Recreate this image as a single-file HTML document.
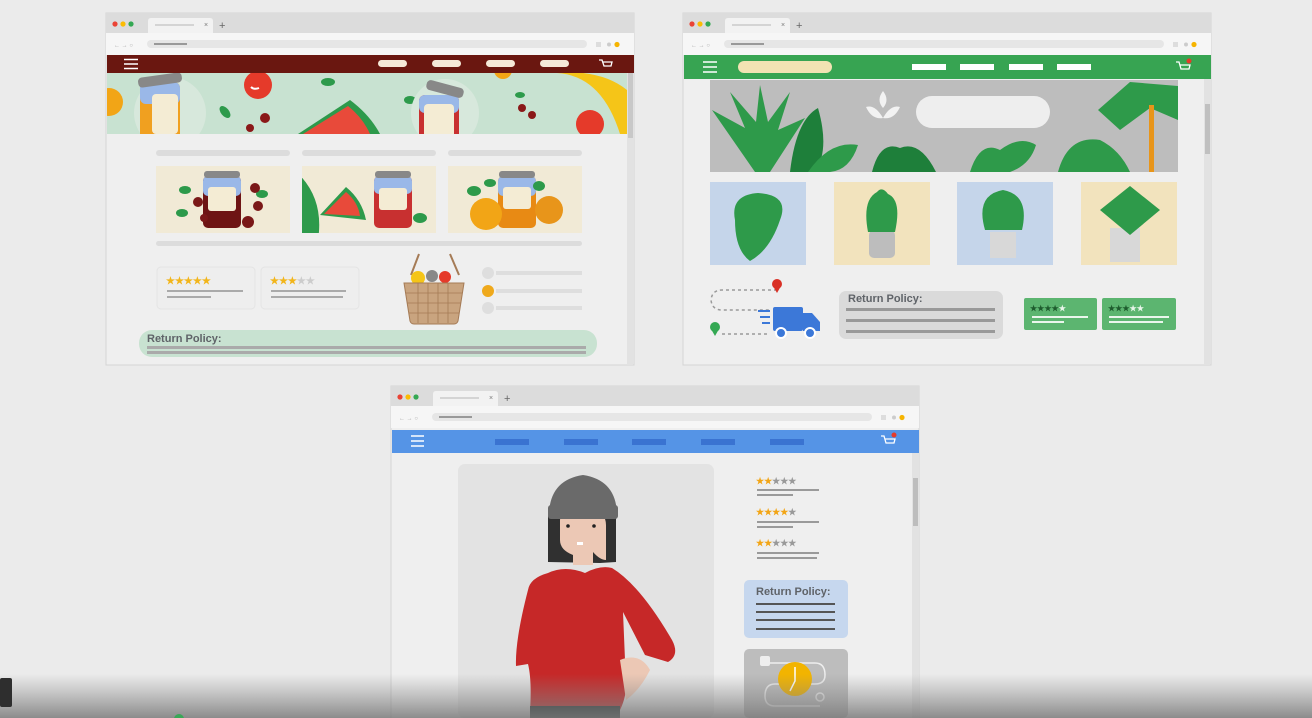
<!DOCTYPE html>
<html><head><meta charset="utf-8"><style>
html,body{margin:0;padding:0;background:#ebebeb;}
svg{display:block}
text{font-family:"Liberation Sans",sans-serif;font-weight:bold;fill:#5f6368}
</style></head><body>
<svg width="1312" height="718" viewBox="0 0 1312 718" xmlns="http://www.w3.org/2000/svg">
<defs>
<clipPath id="h1"><rect x="107" y="73" width="520" height="61"/></clipPath>
<clipPath id="h2"><rect x="710" y="80" width="468" height="92"/></clipPath>
<clipPath id="t1"><rect x="302" y="166" width="134" height="67"/></clipPath>
<linearGradient id="fade" x1="0" y1="0" x2="0" y2="1">
<stop offset="0" stop-color="#888" stop-opacity="0"/>
<stop offset="1" stop-color="#7a7a7a" stop-opacity="0.85"/>
</linearGradient>
<g id="chrome">
<rect x="0" y="0" width="528" height="352" fill="#efefef" stroke="#d4d4d4"/>
<rect x="0" y="0" width="528" height="20" fill="#dcdcdc"/>
<circle cx="9" cy="11" r="2.6" fill="#ea4335"/><circle cx="17" cy="11" r="2.6" fill="#fbbc04"/><circle cx="25" cy="11" r="2.6" fill="#34a853"/>
<path d="M42 20 V8 Q42 5 45 5 H104 Q107 5 107 8 V20Z" fill="#f2f2f2"/>
<rect x="49" y="11" width="39" height="2" fill="#d4d4d4"/>
<text x="98" y="14" font-size="7" style="font-weight:normal;fill:#777">×</text>
<text x="113" y="16" font-size="11" style="font-weight:normal;fill:#666">+</text>
<rect x="0" y="20" width="528" height="22" fill="#f6f6f6"/>
<text x="8" y="34" font-size="6" style="font-weight:normal;fill:#aaa">← → ○</text>
<rect x="41" y="27" width="440" height="8" rx="4" fill="#e6e6e6"/>
<rect x="48" y="30" width="33" height="2" fill="#999"/>
<rect x="490" y="29" width="5" height="5" fill="#ddd"/><circle cx="503" cy="31.5" r="2" fill="#ccc"/><circle cx="511" cy="31.5" r="2.6" fill="#f6b400"/>
</g>
</defs>

<!-- WINDOW 1 -->
<g transform="translate(106,13)"><use href="#chrome"/></g>
<rect x="107" y="55" width="527" height="18" fill="#6a1710"/>
<g stroke="#fff" stroke-width="1.6"><path d="M124 59.5h14M124 64h14M124 68.5h14"/></g>
<g fill="#f5e9d8"><rect x="378" y="60" width="29" height="7" rx="3.5"/><rect x="432" y="60" width="29" height="7" rx="3.5"/><rect x="486" y="60" width="29" height="7" rx="3.5"/><rect x="540" y="60" width="29" height="7" rx="3.5"/></g>
<path d="M599 60h3l2 6h7l1-4h-9" stroke="#fff" stroke-width="1.3" fill="none"/>
<rect x="627" y="73" width="7" height="291" fill="#e2e2e2"/><rect x="628" y="73" width="5" height="65" fill="#c8c8c8"/>
<g clip-path="url(#h1)">
<rect x="107" y="73" width="520" height="61" fill="#c8e2d1"/>
<circle cx="109" cy="102" r="14" fill="#f2a516"/>
<circle cx="170" cy="113" r="36" fill="#d7e8dc"/>
<rect x="140" y="82" width="40" height="60" rx="6" fill="#f0a020"/><rect x="140" y="82" width="40" height="22" rx="6" fill="#9ab8e8"/><rect x="152" y="94" width="26" height="40" rx="4" fill="#f4ecd4"/><rect x="138" y="75" width="44" height="10" rx="4" transform="rotate(-8 160 80)" fill="#888"/>
<circle cx="258" cy="85" r="14" fill="#e53a2a"/><path d="M251 87q3 3 8 1" stroke="#fff" stroke-width="2" fill="none"/>
<path d="M298 134 L350 100 Q370 115 380 134Z" fill="#2d9a4b"/><path d="M303 134 L348 106 Q363 118 370 134Z" fill="#e84a3a"/>
<g fill="#2d9a4b"><ellipse cx="225" cy="112" rx="7" ry="4" transform="rotate(50 225 112)"/><ellipse cx="328" cy="82" rx="7" ry="4"/><ellipse cx="410" cy="100" rx="6" ry="4"/><ellipse cx="520" cy="95" rx="5" ry="3"/></g>
<g fill="#8a1818"><circle cx="265" cy="118" r="5"/><circle cx="250" cy="128" r="4"/><circle cx="522" cy="108" r="4"/><circle cx="532" cy="115" r="4"/></g>
<circle cx="445" cy="113" r="34" fill="#d7e8dc"/>
<rect x="419" y="95" width="40" height="45" rx="6" fill="#c83030"/><rect x="419" y="95" width="40" height="18" rx="6" fill="#9ab8e8"/><rect x="424" y="104" width="30" height="34" rx="4" fill="#f4ecd4"/><rect x="426" y="84" width="38" height="10" rx="4" transform="rotate(15 445 89)" fill="#888"/>
<circle cx="503" cy="70" r="9" fill="#f2a516"/>
<path d="M548 73 Q600 70 620 134 L627 134 L627 90 Q600 68 548 73Z" fill="#f5c518"/>
<circle cx="590" cy="124" r="14" fill="#e53a2a"/>
</g>
<!-- content -->
<g fill="#dcdcdc"><rect x="156" y="150" width="134" height="6" rx="3"/><rect x="302" y="150" width="134" height="6" rx="3"/><rect x="448" y="150" width="134" height="6" rx="3"/><rect x="156" y="241" width="426" height="5" rx="2.5"/></g>
<g fill="#f1ead6"><rect x="156" y="166" width="134" height="67"/><rect x="302" y="166" width="134" height="67"/><rect x="448" y="166" width="134" height="67"/></g>
<rect x="203" y="176" width="38" height="52" rx="5" fill="#6e1414"/><rect x="203" y="176" width="38" height="20" rx="5" fill="#9ab8e8"/><rect x="208" y="187" width="28" height="24" rx="3" fill="#f4ecd4"/><rect x="204" y="171" width="36" height="7" rx="3" fill="#888"/>
<g fill="#2d9a4b"><ellipse cx="185" cy="190" rx="6" ry="4"/><ellipse cx="182" cy="213" rx="6" ry="4"/><ellipse cx="262" cy="194" rx="6" ry="4"/></g>
<g fill="#7a1818"><circle cx="198" cy="202" r="5"/><circle cx="255" cy="188" r="5"/><circle cx="258" cy="206" r="5"/><circle cx="248" cy="222" r="6"/><circle cx="204" cy="218" r="4"/></g>
<g clip-path="url(#t1)">
<path d="M292 168 Q325 195 318 240 H292Z" fill="#2d9a4b"/><path d="M320 215 L346 187 Q362 200 366 220Z" fill="#2d9a4b"/><path d="M324 214 L346 192 Q358 202 360 216Z" fill="#e84a3a"/>
</g>
<rect x="374" y="176" width="38" height="52" rx="5" fill="#c83030"/><rect x="374" y="176" width="38" height="18" rx="5" fill="#9ab8e8"/><rect x="379" y="188" width="28" height="22" rx="3" fill="#f4ecd4"/><rect x="375" y="171" width="36" height="7" rx="3" fill="#888"/>
<ellipse cx="420" cy="218" rx="7" ry="5" fill="#2d9a4b"/>
<rect x="498" y="176" width="38" height="52" rx="5" fill="#e88a14"/><rect x="498" y="176" width="38" height="20" rx="5" fill="#9ab8e8"/><rect x="503" y="187" width="28" height="22" rx="3" fill="#f4ecd4"/><rect x="499" y="171" width="36" height="7" rx="3" fill="#888"/>
<g fill="#2d9a4b"><ellipse cx="474" cy="191" rx="7" ry="5"/><ellipse cx="490" cy="183" rx="6" ry="4"/><ellipse cx="539" cy="186" rx="6" ry="5"/></g>
<circle cx="486" cy="214" r="16" fill="#f2a516"/><circle cx="549" cy="210" r="14" fill="#e8951a"/>
<rect x="157" y="267" width="98" height="42" rx="4" fill="#eeeeee" stroke="#e4e4e4"/>
<rect x="261" y="267" width="98" height="42" rx="4" fill="#eeeeee" stroke="#e4e4e4"/>
<text x="166" y="284" font-size="10" style="fill:#f2b51a">★★★★★</text>
<text x="270" y="284" font-size="10" style="fill:#f2b51a">★★★<tspan style="fill:#ccc">★★</tspan></text>
<g fill="#aaa"><rect x="167" y="290" width="76" height="2"/><rect x="167" y="296" width="44" height="2"/><rect x="271" y="290" width="75" height="2"/><rect x="271" y="296" width="72" height="2"/></g>
<path d="M411 275 L419 254 M459 275 L450 254" stroke="#a57b56" stroke-width="2"/>
<circle cx="418" cy="278" r="7" fill="#f5c518"/><circle cx="445" cy="277" r="6" fill="#e53a2a"/><circle cx="432" cy="276" r="6" fill="#888"/>
<path d="M404 283 H464 L458 321 Q457 324 454 324 H414 Q411 324 410 321Z" fill="#c9a47f" stroke="#a57b56"/>
<g stroke="#a57b56" stroke-width="0.8"><path d="M406 293h56M407 303h54M409 313h50M418 283v40M428 283v40M438 283v40M448 283v40"/></g>
<circle cx="488" cy="273" r="6" fill="#dedede"/><circle cx="488" cy="291" r="6" fill="#efa91c"/><circle cx="488" cy="308" r="6" fill="#dedede"/>
<g fill="#dedede"><rect x="496" y="271" width="86" height="4"/><rect x="496" y="289" width="86" height="4"/><rect x="496" y="306" width="86" height="4"/></g>
<rect x="139" y="330" width="458" height="27" rx="13" fill="#c8e2d1"/>
<text x="147" y="342" font-size="11">Return Policy:</text>
<rect x="147" y="346" width="439" height="3" fill="#aaa"/><rect x="147" y="351" width="439" height="3" fill="#aaa"/>

<!-- WINDOW 2 -->
<g transform="translate(683,13)"><use href="#chrome"/></g>
<rect x="684" y="55" width="527" height="24" fill="#37a452"/>
<g stroke="#fff" stroke-width="1.6"><path d="M703 62h14M703 67h14M703 72h14"/></g>
<rect x="738" y="61" width="94" height="12" rx="6" fill="#f2e3b3"/>
<g fill="#fff"><rect x="912" y="64" width="34" height="6"/><rect x="960" y="64" width="34" height="6"/><rect x="1009" y="64" width="34" height="6"/><rect x="1057" y="64" width="34" height="6"/></g>
<path d="M1176 62h3l2 7h8l1-4h-10" stroke="#fff" stroke-width="1.3" fill="none"/><circle cx="1189" cy="61" r="2.5" fill="#e53a2a"/>
<rect x="1204" y="79" width="7" height="285" fill="#e2e2e2"/><rect x="1205" y="104" width="5" height="50" fill="#c0c0c0"/>
<g clip-path="url(#h2)">
<rect x="710" y="80" width="468" height="92" fill="#bdbdbd"/>
<rect x="916" y="96" width="134" height="32" rx="16" fill="#eeeeee"/>
<path d="M883 91 Q876 100 883 108 Q890 100 883 91Z M866 107 Q875 104 883 118 Q872 120 866 107Z M900 107 Q891 104 883 118 Q894 120 900 107Z" fill="#f2f2f2"/>
<g fill="#2e9a4a">
<path d="M755 172 L712 110 L745 128 L730 92 L756 122 L760 85 L768 122 L790 92 L778 130 L805 118 L770 172Z"/>
<path d="M790 172 Q796 120 818 108 Q830 150 815 172Z" fill="#1e7f3a"/>
<path d="M808 172 Q830 140 858 145 Q850 170 830 172Z"/>
<path d="M872 172 Q880 140 900 148 Q920 140 936 172Z" fill="#1e7f3a"/>
<path d="M970 172 Q980 140 1000 150 Q1020 135 1036 145 Q1030 165 1010 172Z"/>
<path d="M1058 172 Q1068 135 1100 140 Q1120 150 1130 172Z"/>
<path d="M1098 110 L1130 82 L1178 86 L1178 120 L1150 108 L1120 130Z"/>
</g>
<rect x="1149" y="105" width="5" height="67" fill="#e8951a"/>
</g>
<rect x="710" y="182" width="96" height="83" fill="#c5d5ea"/><rect x="834" y="182" width="96" height="83" fill="#f2e3bd"/><rect x="957" y="182" width="96" height="83" fill="#c5d5ea"/><rect x="1081" y="182" width="96" height="83" fill="#f2e3bd"/>
<path d="M735 220 Q730 195 758 193 Q790 195 780 220 Q770 250 750 261 Q735 250 735 220Z" fill="#2e9a4a"/>
<rect x="869" y="230" width="26" height="28" rx="5" fill="#bdbdbd"/><path d="M868 232 Q862 200 877 192 Q882 186 888 194 Q902 200 895 232Z" fill="#2e9a4a"/>
<rect x="990" y="232" width="26" height="26" fill="#d8d8d8"/><path d="M985 230 Q975 195 1003 190 Q1030 195 1022 230Z" fill="#2e9a4a"/>
<rect x="1110" y="228" width="30" height="34" fill="#d8d8d8"/><path d="M1100 210 L1130 186 L1160 210 L1130 235Z" fill="#2e9a4a"/>
<path d="M777 290 H722 Q712 290 711 300 Q712 310 722 310 H770 M722 334 H770" stroke="#9a9a9a" stroke-width="1.5" stroke-dasharray="3 3" fill="none"/>
<circle cx="777" cy="284" r="5" fill="#d93025"/><path d="M773 286 L777 293 L781 286Z" fill="#d93025"/>
<circle cx="715" cy="327" r="5" fill="#34a853"/><path d="M711 329 L715 336 L719 329Z" fill="#34a853"/>
<rect x="773" y="307" width="30" height="24" rx="2" fill="#3c78d8"/><path d="M803 313 H812 L820 322 V331 H803Z" fill="#3c78d8"/>
<circle cx="781" cy="333" r="5" fill="#3c78d8" stroke="#fff" stroke-width="2"/><circle cx="810" cy="333" r="5" fill="#3c78d8" stroke="#fff" stroke-width="2"/>
<g stroke="#3c78d8" stroke-width="2"><path d="M758 311h12M760 317h10M762 323h8"/></g>
<rect x="839" y="291" width="164" height="48" rx="7" fill="#dadada"/>
<text x="848" y="302" font-size="11">Return Policy:</text>
<g fill="#999"><rect x="846" y="308" width="149" height="3"/><rect x="846" y="319" width="149" height="3"/><rect x="846" y="330" width="149" height="3"/></g>
<rect x="1024" y="298" width="73" height="32" rx="2" fill="#5cb570"/><rect x="1102" y="298" width="74" height="32" rx="2" fill="#5cb570"/>
<text x="1030" y="311" font-size="8" style="fill:#1e5c2e">★★★★<tspan style="fill:#e8f5ea">★</tspan></text>
<text x="1108" y="311" font-size="8" style="fill:#1e5c2e">★★★<tspan style="fill:#e8f5ea">★★</tspan></text>
<g fill="#eaf6ec"><rect x="1032" y="316" width="56" height="2"/><rect x="1032" y="321" width="32" height="2"/><rect x="1109" y="316" width="60" height="2"/><rect x="1109" y="321" width="54" height="2"/></g>

<!-- WINDOW 3 -->
<g transform="translate(391,386)"><use href="#chrome"/></g>
<rect x="392" y="430" width="527" height="23" fill="#5594e6"/>
<g stroke="#fff" stroke-width="1.6"><path d="M411 436h13M411 441h13M411 446h13"/></g>
<g fill="#3a73d1"><rect x="495" y="439" width="34" height="6"/><rect x="564" y="439" width="34" height="6"/><rect x="632" y="439" width="34" height="6"/><rect x="701" y="439" width="34" height="6"/><rect x="770" y="439" width="34" height="6"/></g>
<path d="M881 436h3l2 7h8l1-4h-10" stroke="#fff" stroke-width="1.3" fill="none"/><circle cx="894" cy="435" r="2.5" fill="#e53a2a"/>
<rect x="912" y="453" width="7" height="265" fill="#e2e2e2"/><rect x="913" y="478" width="5" height="48" fill="#bdbdbd"/>
<rect x="458" y="464" width="256" height="254" rx="7" fill="#e3e3e3"/>
<path d="M548 515 L548 562 L600 563 L616 562 L616 515Z" fill="#303030"/>
<path d="M560 520 Q560 510 585 505 Q606 510 606 525 L606 560 Q600 560 593 552 L593 565 L573 565 L573 555 Q560 550 560 540Z" fill="#ecc8b5"/>
<path d="M549 514 Q550 480 583 475 Q616 480 617 514Z" fill="#6a6a6a"/>
<rect x="548" y="505" width="70" height="14" rx="3" fill="#6a6a6a"/>
<circle cx="568" cy="526" r="1.8" fill="#222"/><circle cx="594" cy="526" r="1.8" fill="#222"/><rect x="577" y="542" width="6" height="3" fill="#fff"/>
<path d="M548 573 Q565 565 585 573 Q600 565 612 568 Q640 585 672 640 Q680 655 668 662 L645 655 L623 612 L625 660 Q630 690 620 710 L530 712 Q532 680 528 664 L516 666 Q515 640 528 590 Q530 578 548 573Z" fill="#c62828"/>
<path d="M620 660 Q640 652 650 670 Q640 690 626 700Z" fill="#ecc8b5"/>
<rect x="530" y="706" width="90" height="12" fill="#1e2a2a"/>
<text x="756" y="484" font-size="9" style="fill:#f2a516">★★<tspan style="fill:#999">★★★</tspan></text>
<text x="756" y="515" font-size="9" style="fill:#f2a516">★★★★<tspan style="fill:#999">★</tspan></text>
<text x="756" y="546" font-size="9" style="fill:#f2a516">★★<tspan style="fill:#999">★★★</tspan></text>
<g fill="#9a9a9a"><rect x="757" y="489" width="62" height="2"/><rect x="757" y="494" width="36" height="2"/><rect x="757" y="521" width="62" height="2"/><rect x="757" y="526" width="36" height="2"/><rect x="757" y="552" width="62" height="2"/><rect x="757" y="557" width="60" height="2"/></g>
<rect x="744" y="580" width="104" height="58" rx="5" fill="#c6d7ee"/>
<text x="756" y="595" font-size="11">Return Policy:</text>
<g fill="#555"><rect x="756" y="603" width="79" height="2"/><rect x="756" y="611" width="79" height="2"/><rect x="756" y="619" width="79" height="2"/><rect x="756" y="628" width="79" height="2"/></g>
<rect x="744" y="649" width="104" height="69" rx="5" fill="#bdbdbd"/>
<path d="M765 663 H815 Q825 663 825 675 Q825 684 815 684 H775 Q765 684 765 696 Q765 706 775 706 H820" stroke="#eee" stroke-width="1.5" fill="none"/>
<rect x="760" y="656" width="10" height="10" rx="2" fill="#eee"/>
<circle cx="795" cy="679" r="17" fill="#f2b400"/><path d="M795 667 V681 L790 691" stroke="#fff" stroke-width="1.5" fill="none"/>
<circle cx="820" cy="697" r="4" fill="none" stroke="#eee" stroke-width="1.5"/>

<rect x="0" y="674" width="1312" height="44" fill="url(#fade)"/>
<rect x="0" y="678" width="12" height="29" rx="2" fill="#2e2e2e"/>
<circle cx="179" cy="719" r="5" fill="#3aa757"/>
</svg>
</body></html>
